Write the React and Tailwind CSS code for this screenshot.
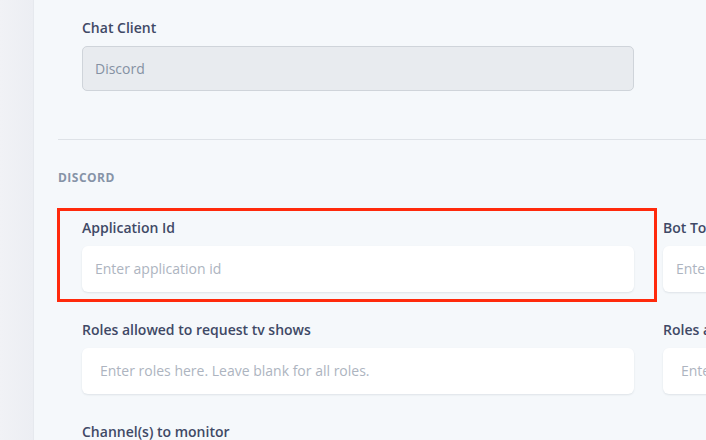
import React from 'react';

const Label = ({ children }) => (
    <div className="mb-2 text-sm leading-5 font-semibold text-[#3f4966]">{children}</div>
);

const TextInput = ({ placeholder, className = '' }) => (
    <div
        className={`h-[46px] flex items-center rounded-md bg-white shadow-[0_1px_2px_rgba(60,70,90,0.12)] text-sm text-[#adb4c0] whitespace-nowrap overflow-hidden ${className}`}
    >
        {placeholder}
    </div>
);

const Field = ({ label, placeholder, inset = 'px-[13px]', highlight = false }) => (
    <div className="relative">
        {highlight && (
            <div className="absolute -left-[25px] -right-[23px] -top-[10px] -bottom-[10px] border-[3px] border-[#ff2a0c] pointer-events-none" />
        )}
        <Label>{label}</Label>
        <TextInput placeholder={placeholder} className={inset} />
    </div>
);

export default function App() {
    return (
        <div className="flex h-[440px] w-[706px] overflow-hidden bg-[#f5f8fb] font-['Open_Sans',sans-serif]">
            <div className="w-[34px] shrink-0 bg-gradient-to-r from-[#f1f2f6] to-[#eceef3] border-r border-[#e6e9ee]" />

            <div className="flex-1 pl-6 pt-[18px]">
                <div className="pl-6 w-[576px]">
                    <Label>Chat Client</Label>
                    <div className="h-[45px] flex items-center px-3 rounded-[5px] bg-[#e8ebef] border border-[#cfd4da] text-sm text-[#8591a3]">
                        Discord
                    </div>
                </div>

                <div className="mt-[48px] border-t border-[#dee2e7]" />

                <div className="mt-[30px] text-xs leading-4 font-bold tracking-[0.04em] text-[#8693a7]">
                    DISCORD
                </div>

                <div className="mt-[32px] pl-6 grid grid-cols-[552px_552px] gap-x-[29px] gap-y-[28px]">
                    <Field label="Application Id" placeholder="Enter application id" highlight />
                    <Field label="Bot Token" placeholder="Enter bot token" inset="px-[13px]" />
                    <Field
                        label="Roles allowed to request tv shows"
                        placeholder="Enter roles here. Leave blank for all roles."
                        inset="px-[18px]"
                    />
                    <Field
                        label="Roles allowed to request movies"
                        placeholder="Enter roles here. Leave blank for all roles."
                        inset="px-[18px]"
                    />
                    <div>
                        <Label>Channel(s) to monitor</Label>
                    </div>
                </div>
            </div>
        </div>
    );
}
